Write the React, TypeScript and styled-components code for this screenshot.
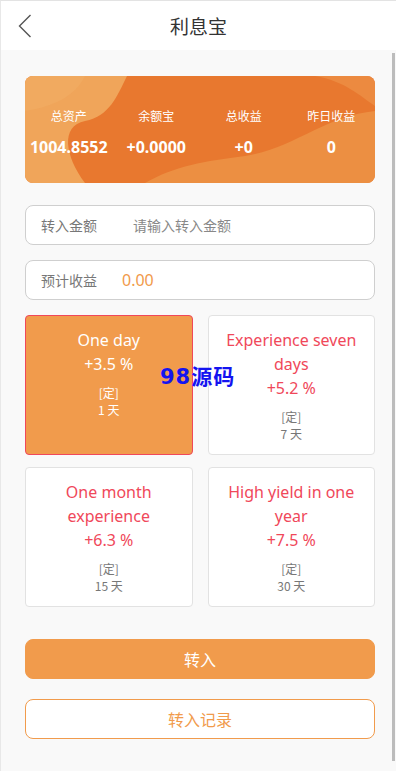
import React from "react";
import styled, { createGlobalStyle } from "styled-components";

const Global = createGlobalStyle`
  html, body { margin: 0; padding: 0; background: #ffffff; }
  body { font-family: "Noto Sans", "Noto Sans CJK SC", sans-serif; }
  * { box-sizing: border-box; }
`;

const Page = styled.div`
  width: 396px;
  height: 771px;
  display: flex;
  flex-direction: column;
  border-top: 1px solid #e3e3e3;
  border-left: 1px solid #e8e8e8;
  background: #f9f9f9;
  overflow: hidden;
`;

const Header = styled.div`
  height: 49px;
  background: #ffffff;
  display: grid;
  grid-template-columns: 50px 1fr 50px;
  align-items: center;
`;

const Back = styled.div`
  display: flex;
  align-items: center;
  padding-left: 17px;
`;

const Title = styled.div`
  text-align: center;
  font-size: 19px;
  color: #333;
  font-family: "Noto Sans CJK SC", sans-serif;
`;

const Main = styled.div`
  flex: 1;
  display: flex;
  min-height: 0;
`;

const Content = styled.div`
  flex: 1;
  padding: 26px 17px 0 24px;
  display: flex;
  flex-direction: column;
  position: relative;
`;

const Track = styled.div`
  width: 4px;
  padding-top: 3px;
`;

const Thumb = styled.div`
  width: 3px;
  height: 708px;
  background: #bcbcbc;
`;

const Banner = styled.div`
  position: relative;
  height: 107px;
  border-radius: 8px;
  overflow: hidden;
  background: #e8782f;
`;

const Waves = styled.svg`
  position: absolute;
  inset: 0;
`;

const Stats = styled.div`
  position: relative;
  height: 100%;
  display: grid;
  grid-template-columns: repeat(4, 1fr);
  align-content: center;
  padding-top: 4px;
`;

const Stat = styled.div`
  display: flex;
  flex-direction: column;
  align-items: center;
  color: #fff;
  gap: 12px;
`;

const StatLabel = styled.div`
  font-size: 12px;
  font-family: "Noto Sans CJK SC", sans-serif;
  line-height: 18px;
`;

const StatValue = styled.div`
  font-size: 16px;
  font-weight: 700;
  line-height: 20px;
  white-space: nowrap;
`;

const Field = styled.div<{ $mt: number }>`
  margin-top: ${(p) => p.$mt}px;
  height: 40px;
  background: #fff;
  border: 1px solid #cfcfcf;
  border-radius: 8px;
  display: flex;
  align-items: center;
  padding-left: 15px;
  font-family: "Noto Sans CJK SC", sans-serif;
`;

const FieldLabel = styled.div<{ $w: number }>`
  width: ${(p) => p.$w}px;
  font-size: 14px;
  color: #777;
`;

const Placeholder = styled.div`
  font-size: 14px;
  color: #888;
`;

const Amount = styled.div`
  font-size: 16px;
  color: #f19a4b;
  font-family: "Noto Sans", sans-serif;
`;

const Grid = styled.div`
  margin-top: 15px;
  display: grid;
  grid-template-columns: 1fr 1fr;
  column-gap: 15px;
  row-gap: 12px;
`;

const Card = styled.div<{ $active?: boolean }>`
  height: 140px;
  border-radius: 4px;
  border: 1px solid ${(p) => (p.$active ? "#f0485a" : "#e2e2e2")};
  background: ${(p) => (p.$active ? "#f19b4c" : "#ffffff")};
  color: ${(p) => (p.$active ? "#ffffff" : "#f0485a")};
  display: flex;
  flex-direction: column;
  align-items: center;
  padding: 12px 8px 0;
  text-align: center;
`;

const CardTitle = styled.div`
  font-size: 16px;
  line-height: 24px;
`;

const Rate = styled.div`
  font-size: 16px;
  line-height: 24px;
`;

const Fixed = styled.div<{ $active?: boolean; $first?: boolean }>`
  margin-top: ${(p) => (p.$first ? 8 : 0)}px;
  font-size: 12px;
  line-height: 17px;
  color: ${(p) => (p.$active ? "#ffffff" : "#777")};
  font-family: "Noto Sans CJK SC", sans-serif;
`;

const Watermark = styled.div`
  position: absolute;
  left: 159px;
  top: 315px;
  font-size: 21px;
  font-weight: 700;
  color: #1414f0;
  font-family: "DejaVu Sans", "Noto Sans CJK SC", sans-serif;
  letter-spacing: 1px;
  line-height: 24px;
  white-space: nowrap;
`;

const Button = styled.div<{ $outline?: boolean }>`
  margin-top: ${(p) => (p.$outline ? 20 : 32)}px;
  height: 40px;
  border-radius: 8px;
  display: flex;
  align-items: center;
  justify-content: center;
  font-size: 16px;
  font-family: "Noto Sans CJK SC", sans-serif;
  background: ${(p) => (p.$outline ? "#ffffff" : "#f19b4c")};
  color: ${(p) => (p.$outline ? "#f19b4c" : "#ffffff")};
  border: 1px solid #f19b4c;
`;

const stats = [
  { label: "总资产", value: "1004.8552" },
  { label: "余额宝", value: "+0.0000" },
  { label: "总收益", value: "+0" },
  { label: "昨日收益", value: "0" },
];

const plans = [
  { title: ["One day"], rate: "+3.5 %", days: "1 天", active: true },
  { title: ["Experience seven", "days"], rate: "+5.2 %", days: "7 天" },
  { title: ["One month", "experience"], rate: "+6.3 %", days: "15 天" },
  { title: ["High yield in one", "year"], rate: "+7.5 %", days: "30 天" },
];

export default function App() {
  return (
    <>
      <Global />
      <Page>
        <Header>
          <Back>
            <svg width="14" height="24" viewBox="0 0 14 24">
              <path d="M12.5 1 L1.5 12 L12.5 23" fill="none" stroke="#555" strokeWidth="1.4" />
            </svg>
          </Back>
          <Title>利息宝</Title>
          <div />
        </Header>
        <Main>
          <Content>
            <Banner>
              <Waves width="350" height="107" viewBox="0 0 350 107" preserveAspectRatio="none">
                <path d="M0 0 H102 C92 20 85 40 60 45 C35 50 40 80 60 107 H0 Z" fill="#f0a55a" />
                <path d="M0 0 H60 C50 20 30 30 0 35 Z" fill="#f2ad64" opacity="0.6" />
                <path d="M120 107 C150 90 180 85 220 80 C270 72 300 40 350 35 V107 Z" fill="#ec8f42" />
                <path d="M290 0 H350 V30 C335 20 320 5 290 0 Z" fill="#ec8a40" />
              </Waves>
              <Stats>
                {stats.map((s) => (
                  <Stat key={s.label}>
                    <StatLabel>{s.label}</StatLabel>
                    <StatValue>{s.value}</StatValue>
                  </Stat>
                ))}
              </Stats>
            </Banner>
            <Field $mt={22}>
              <FieldLabel $w={92}>转入金额</FieldLabel>
              <Placeholder>请输入转入金额</Placeholder>
            </Field>
            <Field $mt={15}>
              <FieldLabel $w={81}>预计收益</FieldLabel>
              <Amount>0.00</Amount>
            </Field>
            <Grid>
              {plans.map((p) => (
                <Card key={p.rate} $active={p.active}>
                  {p.title.map((t) => (
                    <CardTitle key={t}>{t}</CardTitle>
                  ))}
                  <Rate>{p.rate}</Rate>
                  <Fixed $active={p.active} $first>[定]</Fixed>
                  <Fixed $active={p.active}>{p.days}</Fixed>
                </Card>
              ))}
            </Grid>
            <Watermark>98源码</Watermark>
            <Button>转入</Button>
            <Button $outline>转入记录</Button>
          </Content>
          <Track>
            <Thumb />
          </Track>
        </Main>
      </Page>
    </>
  );
}
